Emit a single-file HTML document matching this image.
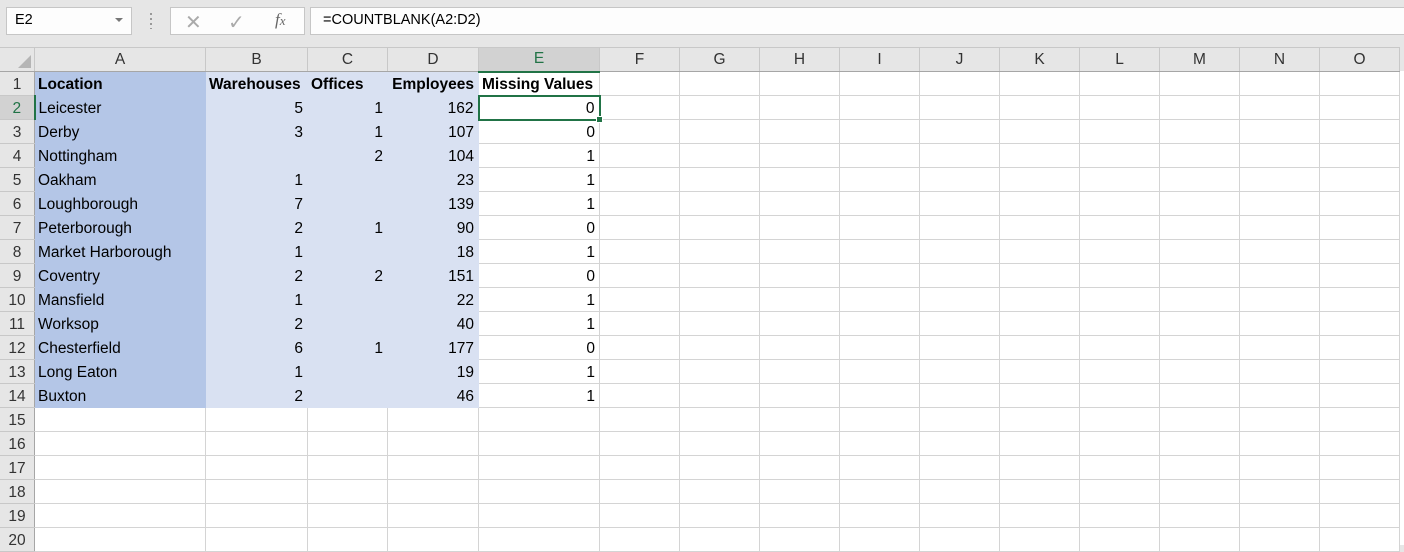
<!DOCTYPE html>
<html><head><meta charset="utf-8"><style>
body{margin:0;width:1404px;height:545px;overflow:hidden;background:#e6e6e6;font-family:"Liberation Sans",sans-serif;position:relative}
.fb{position:absolute;top:7px;height:28px;background:#fdfdfd;border:1px solid #c6c6c6;box-sizing:border-box}
table{position:absolute;top:47px;left:-1px;border-collapse:collapse;table-layout:fixed;font-size:15.5px;color:#000}
td{height:24px;padding:0 4px 0 3px;border:1px solid #d4d4d4;background:#fff;white-space:nowrap;overflow:visible;vertical-align:bottom;line-height:20px;box-sizing:border-box}
tr{height:24px}
tr.h td{background:#e6e6e6;border-color:#c8c8c8;border-bottom:1px solid #a6a6a6;text-align:center;color:#333;vertical-align:middle;padding:0}
td.r{background:#e6e6e6;border-color:#c8c8c8;border-right:1px solid #a6a6a6;text-align:center;color:#333;padding:0}
td.a{background:#b4c6e7;border-color:#b4c6e7}
td.b{background:#d9e1f2;border-color:#d9e1f2;text-align:right}
td.n{text-align:right}
tr.t td{font-weight:bold}
tr.t td.b{text-align:left}
</style></head><body>
<div style="position:absolute;left:0;top:71px;width:1404px;height:474px;background:#fff"></div>
<div class="fb" style="left:6px;width:126px"><span style="position:absolute;left:8px;top:4px;font-size:14.5px">E2</span><span style="position:absolute;left:108px;top:10px;border-left:4px solid transparent;border-right:4px solid transparent;border-top:4px solid #777"></span></div>
<div style="position:absolute;left:150px;top:13px;width:2px;height:16px;background:repeating-linear-gradient(#999 0 2px,transparent 2px 5px)"></div>
<div class="fb" style="left:170px;width:135px">
<span style="position:absolute;left:14px;top:2px;font-size:20px;color:#aaa">✕</span>
<span style="position:absolute;left:57px;top:2px;font-size:20px;color:#aaa">✓</span>
<span style="position:absolute;left:104px;top:2px;font-size:17px;font-style:italic;font-family:'Liberation Serif',serif;color:#666">f<span style="font-size:13px">x</span></span></div>
<div class="fb" style="left:310px;width:1100px"><span style="position:absolute;left:12px;top:4px;font-size:14.5px">=COUNTBLANK(A2:D2)</span></div>
<table>
<colgroup><col style="width:35px"><col style="width:171px"><col style="width:102px"><col style="width:80px"><col style="width:91px"><col style="width:121px"><col style="width:80px"><col style="width:80px"><col style="width:80px"><col style="width:80px"><col style="width:80px"><col style="width:80px"><col style="width:80px"><col style="width:80px"><col style="width:80px"><col style="width:80px"></colgroup>
<tr class="h"><td style="position:relative"><span style="position:absolute;right:3px;bottom:3px;border-left:13px solid transparent;border-bottom:13px solid #b5b5b5"></span></td><td>A</td><td>B</td><td>C</td><td>D</td><td style="background:#d2d2d2;border-bottom:2px solid #217346;color:#217346">E</td><td>F</td><td>G</td><td>H</td><td>I</td><td>J</td><td>K</td><td>L</td><td>M</td><td>N</td><td>O</td></tr>
<tr class="t"><td class="r" style="font-weight:normal">1</td><td class="a">Location</td><td class="b">Warehouses</td><td class="b">Offices</td><td class="b" style="text-align:right">Employees</td><td>Missing Values</td><td></td><td></td><td></td><td></td><td></td><td></td><td></td><td></td><td></td><td></td></tr>
<tr><td class="r" style="background:#d2d2d2;color:#217346;border-right:2px solid #217346">2</td><td class="a">Leicester</td><td class="b">5</td><td class="b">1</td><td class="b">162</td><td class="n" style="border:2px solid #217346;position:relative">0<span style="position:absolute;right:-4px;bottom:-4px;width:5px;height:5px;background:#217346;border:1px solid #fff"></span></td><td></td><td></td><td></td><td></td><td></td><td></td><td></td><td></td><td></td><td></td></tr>
<tr><td class="r">3</td><td class="a">Derby</td><td class="b">3</td><td class="b">1</td><td class="b">107</td><td class="n">0</td><td></td><td></td><td></td><td></td><td></td><td></td><td></td><td></td><td></td><td></td></tr>
<tr><td class="r">4</td><td class="a">Nottingham</td><td class="b"></td><td class="b">2</td><td class="b">104</td><td class="n">1</td><td></td><td></td><td></td><td></td><td></td><td></td><td></td><td></td><td></td><td></td></tr>
<tr><td class="r">5</td><td class="a">Oakham</td><td class="b">1</td><td class="b"></td><td class="b">23</td><td class="n">1</td><td></td><td></td><td></td><td></td><td></td><td></td><td></td><td></td><td></td><td></td></tr>
<tr><td class="r">6</td><td class="a">Loughborough</td><td class="b">7</td><td class="b"></td><td class="b">139</td><td class="n">1</td><td></td><td></td><td></td><td></td><td></td><td></td><td></td><td></td><td></td><td></td></tr>
<tr><td class="r">7</td><td class="a">Peterborough</td><td class="b">2</td><td class="b">1</td><td class="b">90</td><td class="n">0</td><td></td><td></td><td></td><td></td><td></td><td></td><td></td><td></td><td></td><td></td></tr>
<tr><td class="r">8</td><td class="a">Market Harborough</td><td class="b">1</td><td class="b"></td><td class="b">18</td><td class="n">1</td><td></td><td></td><td></td><td></td><td></td><td></td><td></td><td></td><td></td><td></td></tr>
<tr><td class="r">9</td><td class="a">Coventry</td><td class="b">2</td><td class="b">2</td><td class="b">151</td><td class="n">0</td><td></td><td></td><td></td><td></td><td></td><td></td><td></td><td></td><td></td><td></td></tr>
<tr><td class="r">10</td><td class="a">Mansfield</td><td class="b">1</td><td class="b"></td><td class="b">22</td><td class="n">1</td><td></td><td></td><td></td><td></td><td></td><td></td><td></td><td></td><td></td><td></td></tr>
<tr><td class="r">11</td><td class="a">Worksop</td><td class="b">2</td><td class="b"></td><td class="b">40</td><td class="n">1</td><td></td><td></td><td></td><td></td><td></td><td></td><td></td><td></td><td></td><td></td></tr>
<tr><td class="r">12</td><td class="a">Chesterfield</td><td class="b">6</td><td class="b">1</td><td class="b">177</td><td class="n">0</td><td></td><td></td><td></td><td></td><td></td><td></td><td></td><td></td><td></td><td></td></tr>
<tr><td class="r">13</td><td class="a">Long Eaton</td><td class="b">1</td><td class="b"></td><td class="b">19</td><td class="n">1</td><td></td><td></td><td></td><td></td><td></td><td></td><td></td><td></td><td></td><td></td></tr>
<tr><td class="r">14</td><td class="a">Buxton</td><td class="b">2</td><td class="b"></td><td class="b">46</td><td class="n">1</td><td></td><td></td><td></td><td></td><td></td><td></td><td></td><td></td><td></td><td></td></tr>
<tr><td class="r">15</td><td></td><td></td><td></td><td></td><td></td><td></td><td></td><td></td><td></td><td></td><td></td><td></td><td></td><td></td><td></td></tr>
<tr><td class="r">16</td><td></td><td></td><td></td><td></td><td></td><td></td><td></td><td></td><td></td><td></td><td></td><td></td><td></td><td></td><td></td></tr>
<tr><td class="r">17</td><td></td><td></td><td></td><td></td><td></td><td></td><td></td><td></td><td></td><td></td><td></td><td></td><td></td><td></td><td></td></tr>
<tr><td class="r">18</td><td></td><td></td><td></td><td></td><td></td><td></td><td></td><td></td><td></td><td></td><td></td><td></td><td></td><td></td><td></td></tr>
<tr><td class="r">19</td><td></td><td></td><td></td><td></td><td></td><td></td><td></td><td></td><td></td><td></td><td></td><td></td><td></td><td></td><td></td></tr>
<tr><td class="r">20</td><td></td><td></td><td></td><td></td><td></td><td></td><td></td><td></td><td></td><td></td><td></td><td></td><td></td><td></td><td></td></tr>
</table>
</body></html>
